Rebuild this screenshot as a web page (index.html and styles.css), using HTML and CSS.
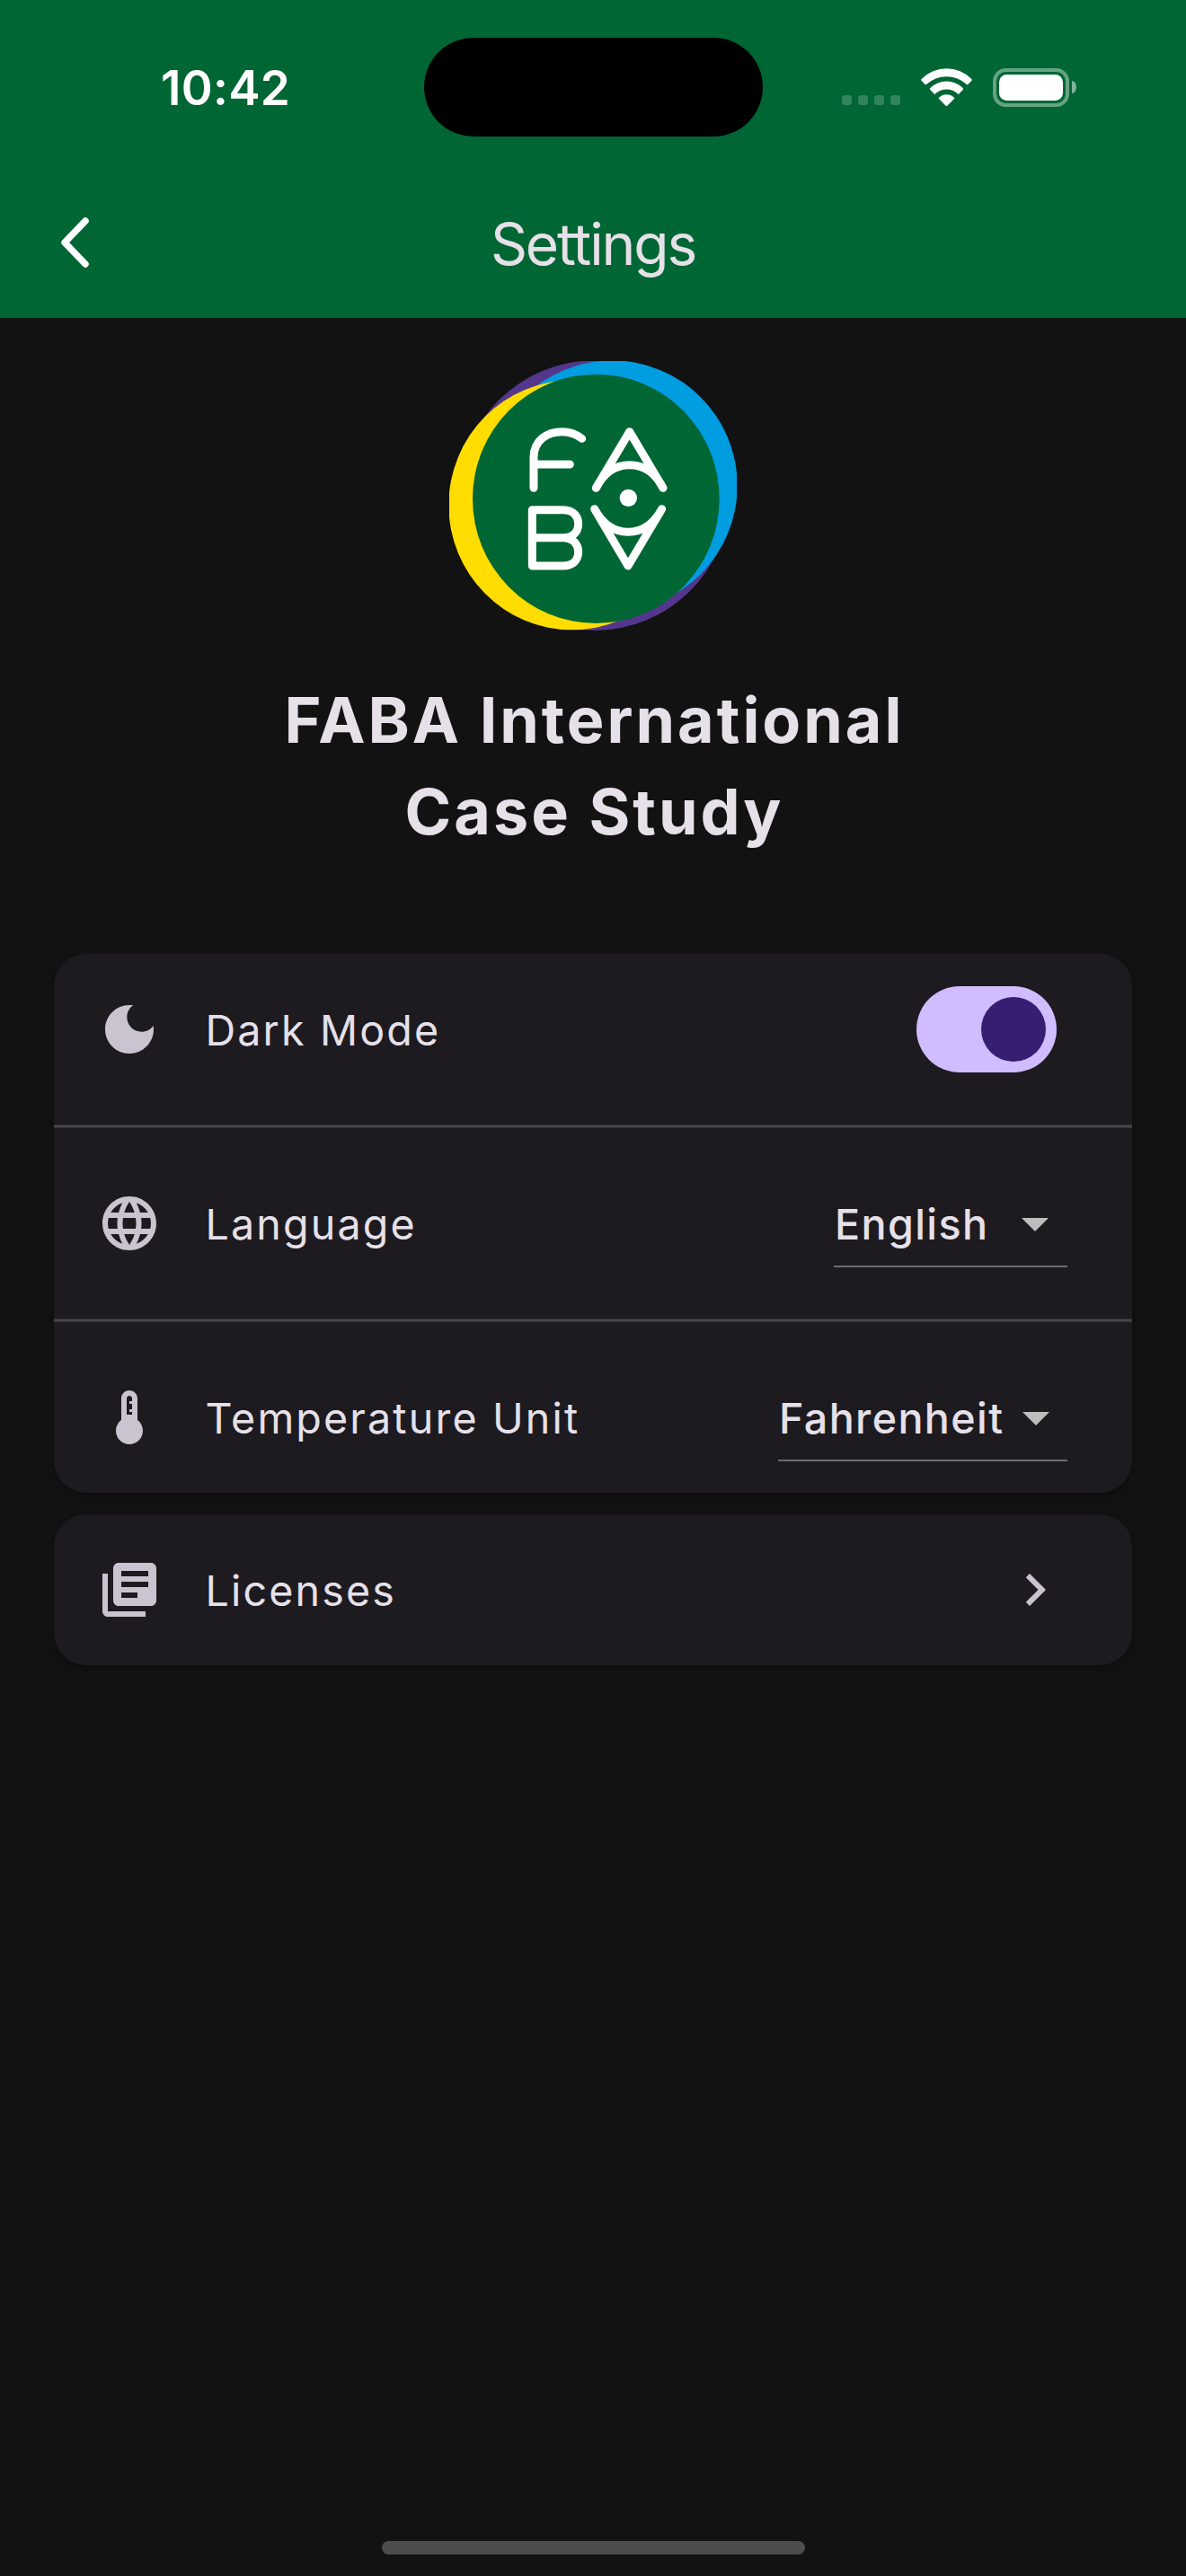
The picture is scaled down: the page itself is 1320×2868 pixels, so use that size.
FILE: index.html
```html
<!DOCTYPE html>
<html lang="en">
<head>
<meta charset="utf-8">
<title>Settings</title>
<link rel="stylesheet" href="styles.css">
</head>
<body>
<div class="screen">
  <header class="header">
    <div class="status">
      <div class="time">10:42</div>
      <div class="island"></div>
      <div class="indicators">
        <div class="signal"><i></i><i></i><i></i><i></i></div>
        <svg class="wifi" viewBox="0 0 171 126">
          <path d="M2 36A117 117 0 0 1 169 36Q172 38.500 169.500 41L157 54Q155 56 153 54A100 100 0 0 0 18 54Q16 56 14 54L1.500 41Q-1 38.500 2 36Z"/>
          <path d="M31 66A77 77 0 0 1 140 66Q143 68.500 140.500 71L127 85.500Q125 87.500 123 85.500A55 55 0 0 0 48 85.500Q46 87.500 44 85.500L30.500 71Q28 68.500 31 66Z"/>
          <path d="M60 98A37 37 0 0 1 111 98Q113 100 111 102L88 125Q85.500 127.500 83 125L60 102Q58 100 60 98Z"/>
        </svg>
        <div class="battery"><div class="battery-case"><div class="battery-level"></div></div><div class="battery-nub"></div></div>
      </div>
    </div>
    <nav class="nav">
      <svg class="back" viewBox="0 0 34 58"><path d="M29 5L6 29L29 53"/></svg>
      <h1 class="nav-title">Settings</h1>
    </nav>
  </header>

  <main class="content">
    <svg class="logo" viewBox="60 66 960 900">
      <circle cx="545" cy="515" r="451" fill="#54378c"/>
      <circle cx="604" cy="482" r="418" fill="#009de0"/>
      <ellipse cx="470" cy="547" rx="412" ry="417" fill="#ffdd00"/>
      <ellipse cx="550" cy="526" rx="412" ry="416" fill="#006633"/>
      <g class="logo-mark">
        <path d="M342 490V388C342 332 385 302 437 302C465 302 485 310 503 325M342 411H463"/>
        <path d="M550 490L662 302L774 490M550 490C576 438 612 413 662 413C712 413 748 438 774 490"/>
        <path d="M337 563V750M337 563H440C475 563 491 585 491 609C491 635 475 656 440 656H337M440 656C475 656 491 680 491 703C491 728 475 750 440 750H337"/>
        <path d="M545 560L657 750L770 560M545 560C572 610 610 637 657 637C705 637 743 610 770 560"/>
      </g>
      <circle cx="658" cy="523" r="29" fill="#fff"/>
    </svg>
    <h2 class="title">FABA International<br>Case Study</h2>

    <section class="card">
      <div class="row">
        <svg class="icon" viewBox="0 0 24 24"><path d="M12 3c-4.970 0-9 4.030-9 9s4.030 9 9 9 9-4.030 9-9c0-.460-.040-.920-.100-1.360-.980 1.370-2.580 2.260-4.400 2.260-2.980 0-5.400-2.420-5.400-5.400 0-1.810.890-3.420 2.260-4.400-.440-.060-.900-.100-1.360-.100z"/></svg>
        <span class="label">Dark Mode</span>
        <div class="switch"><div class="thumb"></div></div>
      </div>
      <div class="divider"></div>
      <div class="row">
        <svg class="icon" viewBox="0 0 24 24"><path d="M11.990 2C6.470 2 2 6.480 2 12s4.470 10 9.990 10C17.520 22 22 17.520 22 12S17.520 2 11.990 2zm6.930 6h-2.950c-.320-1.250-.780-2.450-1.380-3.560 1.840.630 3.370 1.910 4.330 3.560zM12 4.040c.830 1.200 1.480 2.530 1.910 3.960h-3.820c.430-1.430 1.080-2.760 1.910-3.960zM4.260 14C4.100 13.360 4 12.690 4 12s.100-1.360.260-2h3.380c-.080.660-.140 1.320-.140 2s.060 1.340.140 2H4.260zm.820 2h2.950c.320 1.250.780 2.450 1.380 3.560-1.840-.630-3.370-1.900-4.330-3.560zm2.950-8H5.080c.960-1.660 2.490-2.930 4.330-3.560C8.810 5.550 8.350 6.750 8.030 8zM12 19.960c-.830-1.200-1.480-2.530-1.910-3.960h3.820c-.430 1.430-1.080 2.760-1.910 3.960zM14.340 14H9.660c-.090-.660-.160-1.320-.160-2s.070-1.350.160-2h4.680c.090.650.160 1.320.160 2s-.070 1.340-.160 2zm.250 5.560c.600-1.110 1.060-2.310 1.380-3.560h2.950c-.960 1.650-2.490 2.930-4.330 3.560zM16.360 14c.080-.660.140-1.320.140-2s-.060-1.340-.140-2h3.380c.160.640.260 1.310.260 2s-.100 1.360-.260 2h-3.380z"/></svg>
        <span class="label">Language</span>
        <div class="select select-language">
          <span>English</span>
          <svg class="icon caret" viewBox="0 0 24 24"><path d="M7 10l5 5 5-5z"/></svg>
        </div>
      </div>
      <div class="divider"></div>
      <div class="row">
        <svg class="icon" viewBox="0 0 24 24"><path d="M15 13V5c0-1.660-1.340-3-3-3S9 3.340 9 5v8c-1.210.910-2 2.370-2 4 0 2.760 2.240 5 5 5s5-2.240 5-5c0-1.630-.790-3.090-2-4zm-4-2V5c0-.550.450-1 1-1s1 .450 1 1v1h-1v1h1v2h-1v1h1v1h-2z"/></svg>
        <span class="label">Temperature Unit</span>
        <div class="select select-unit">
          <span>Fahrenheit</span>
          <svg class="icon caret" viewBox="0 0 24 24"><path d="M7 10l5 5 5-5z"/></svg>
        </div>
      </div>
    </section>

    <section class="card">
      <div class="row">
        <svg class="icon" viewBox="0 0 24 24"><path d="M4 6H2v14c0 1.100.900 2 2 2h14v-2H4V6zM20 2H8c-1.100 0-2 .900-2 2v12c0 1.100.900 2 2 2h12c1.100 0 2-.900 2-2V4c0-1.100-.900-2-2-2zM9 5h10v2H9zM9 9v2h10V9zM9 13v2h6v-2z" fill-rule="evenodd"/></svg>
        <span class="label">Licenses</span>
        <svg class="icon" viewBox="0 0 24 24"><path d="M10 6L8.590 7.410 13.170 12l-4.580 4.590L10 18l6-6z"/></svg>
      </div>
    </section>
  </main>
  <div class="home-indicator"></div>
</div>
</body>
</html>
```
FILE: styles.css
```css
* { box-sizing: border-box; margin: 0; }

body {
  background: #121212;
  color: #e6e0e9;
  font-family: Inter, "Liberation Sans", sans-serif;
}

svg { display: block; flex: none; }

.screen {
  display: flex;
  flex-direction: column;
  width: 1320px;
  height: 2868px;
  padding-bottom: 24px;
  overflow: hidden;
}

/* Header */
.header { height: 354px; background: #006633; }

.status {
  display: grid;
  grid-template-columns: 472px 377px 1fr;
  align-items: center;
  height: 194px;
}

.time {
  padding: 2px 0 0 179px;
  color: #fff;
  font-size: 53px;
  font-weight: 600;
  letter-spacing: 0.3px;
}

.island { height: 110px; border-radius: 55px; background: #000; }

.indicators {
  display: flex;
  align-items: flex-end;
  height: 43px;
  padding-left: 88px;
}

.signal { display: flex; gap: 7px; width: 65px; margin-bottom: 1.5px; }
.signal i { width: 11px; height: 11px; border-radius: 3.5px; background: rgba(255, 255, 255, 0.2); }

.wifi { width: 57px; height: 42px; margin: 0 23.5px 1px 22.5px; fill: #fff; }

.battery { display: flex; align-items: center; gap: 3px; }
.battery-case {
  width: 85px;
  height: 43px;
  padding: 3px;
  border: 4px solid rgba(255, 255, 255, 0.4);
  border-radius: 14.5px;
}
.battery-level { height: 29px; border-radius: 8.5px; background: #fff; }
.battery-nub { width: 5px; height: 14px; border-radius: 0 5px 5px 0 / 0 7px 7px 0; background: rgba(255, 255, 255, 0.5); }

.nav {
  display: grid;
  grid-template-columns: 1fr auto 1fr;
  align-items: center;
  height: 154px;
}
.back {
  width: 34px;
  height: 58px;
  margin: 0 0 2px 66px;
  fill: none;
  stroke: #fff;
  stroke-width: 7.5;
  stroke-linecap: round;
  stroke-linejoin: round;
}
.nav-title { font-size: 64px; font-weight: 400; letter-spacing: -2.1px; }

/* Content */
.content {
  display: flex;
  flex: 1;
  flex-direction: column;
  padding: 48px 60px 0;
}

.logo { align-self: center; width: 320px; height: 300px; }
.logo-mark {
  fill: none;
  stroke: #fff;
  stroke-width: 27;
  stroke-linecap: round;
  stroke-linejoin: round;
}

.title {
  margin: 49px 0 107px;
  padding-left: 3px;
  font-size: 70px;
  font-weight: 700;
  line-height: 102px;
  letter-spacing: 3px;
  text-align: center;
}

.card {
  margin-bottom: 24px;
  border-radius: 36px;
  background: #1d1b20;
  box-shadow: 0 3px 6px rgba(0, 0, 0, 0.3);
}

.row {
  display: flex;
  align-items: center;
  height: 168px;
  padding: 0 72px 0 48px;
}

.divider {
  height: 4px;
  margin: 22px 0;
  border: solid #33303a;
  border-width: 1px 0;
  background: #49454f;
}

.icon { width: 72px; height: 72px; fill: #cac4d0; }

.label {
  flex: 1;
  padding: 2px 0 0 48.5px;
  font-size: 46.6px;
  letter-spacing: 2.15px;
}

.switch {
  display: flex;
  justify-content: flex-end;
  width: 156px;
  height: 96px;
  margin-right: 12px;
  padding: 12px;
  border-radius: 48px;
  background: #d0bcff;
}
.thumb { width: 72px; height: 72px; border-radius: 50%; background: #381e72; }

.select {
  display: flex;
  align-items: center;
  justify-content: space-between;
  height: 98px;
  padding-top: 2px;
  border-bottom: 2px solid #6e6b70;
  font-size: 46.6px;
  font-weight: 500;
  letter-spacing: 1.4px;
}
.select span { padding: 2px 0 0 1px; }
.select-language { width: 260px; }
.select-unit { width: 322px; }
.caret { fill: #bdbdbd; }

.home-indicator {
  align-self: center;
  width: 471px;
  height: 15px;
  border-radius: 8px;
  background: #4d4d4d;
}
```
